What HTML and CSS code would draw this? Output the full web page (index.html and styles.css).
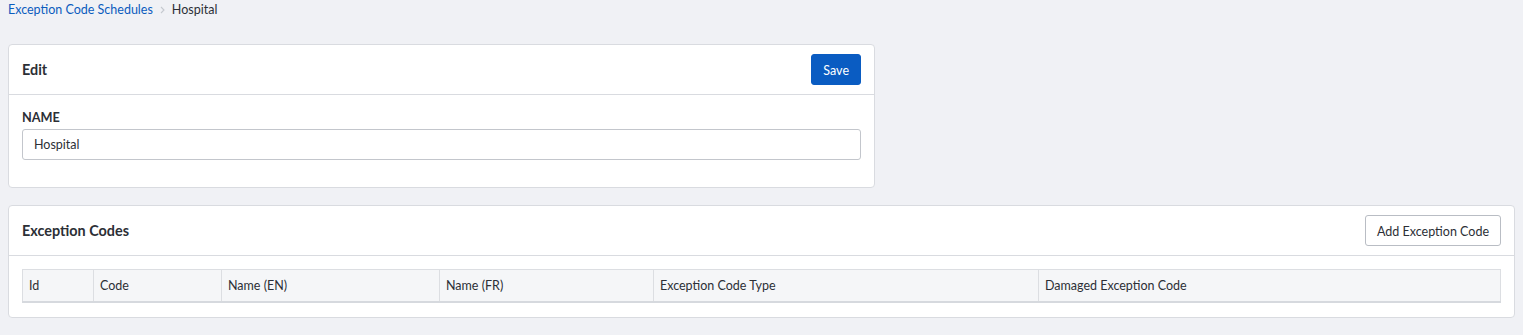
FILE: index.html
```html
<!DOCTYPE html>
<html lang="en">
<head>
  <meta charset="UTF-8" />
  <meta name="viewport" content="width=device-width, initial-scale=1.0" />
  <title>Hospital - Exception Code Schedules</title>
  <link rel="stylesheet" href="styles.css">
</head>
<body>
  <nav class="breadcrumb">
    <a href="#">Exception Code Schedules</a>
    <svg class="sep" width="5" height="8" viewBox="0 0 5 8"><path d="M1 1l3 3-3 3" fill="none" stroke="#c5c9cf" stroke-width="1.1"/></svg>
    <span class="current">Hospital</span>
  </nav>

  <div class="card edit-card">
    <div class="card-header">
      <h3>Edit</h3>
      <button class="btn btn-primary">Save</button>
    </div>
    <div class="card-body">
      <label for="name">NAME</label>
      <input type="text" id="name" value="Hospital" />
    </div>
  </div>

  <div class="card">
    <div class="card-header">
      <h3>Exception Codes</h3>
      <button class="btn btn-default">Add Exception Code</button>
    </div>
    <div class="card-body table-body">
      <table>
        <thead>
          <tr>
            <th class="col-id">Id</th>
            <th class="col-code">Code</th>
            <th class="col-en">Name (EN)</th>
            <th class="col-fr">Name (FR)</th>
            <th class="col-type">Exception Code Type</th>
            <th>Damaged Exception Code</th>
          </tr>
        </thead>
      </table>
    </div>
  </div>
</body>
</html>
```

FILE: styles.css
```css
body {
  font-family: Lato, 'Liberation Sans', sans-serif;
  margin: 0;
  padding: 0 8px;
  background: #f0f1f5;
  color: #2c2f36;
  font-size: 12.5px;
}
.breadcrumb {
  display: flex;
  align-items: center;
  height: 19px;
  font-size: 12.5px;
}
.breadcrumb a {
  color: #0b5cbe;
  text-decoration: none;
}
.breadcrumb .sep {
  margin: 1px 7px 0 7px;
}
.breadcrumb .current {
  color: #2c2f36;
}
.card {
  background: #ffffff;
  border: 1px solid #d9dbe0;
  border-radius: 4px;
  margin-top: 17px;
}
.edit-card {
  width: 865px;
  margin-top: 25px;
}
.card-header {
  display: flex;
  align-items: center;
  justify-content: space-between;
  height: 49px;
  padding: 0 13px;
  border-bottom: 1px solid #d9dbe0;
}
.card-header h3 {
  margin: 0;
  font-size: 14.4px;
  font-weight: 700;
  color: #2c2f36;
}
.btn {
  font-family: inherit;
  font-size: 12.5px;
  height: 31px;
  padding: 1px 11px 0;
  border-radius: 3px;
  cursor: pointer;
}
.btn-primary {
  background: #0a5cc2;
  color: #ffffff;
  border: 1px solid #0a5cc2;
}
.btn-default {
  background: #ffffff;
  color: #2c2f36;
  border: 1px solid #b9bdc4;
}
.card-body {
  padding: 14px 13px 27px;
}
label {
  display: block;
  font-size: 12.7px;
  font-weight: 700;
  color: #2c2f36;
  margin-bottom: 4px;
}
input {
  display: block;
  box-sizing: border-box;
  width: 100%;
  height: 31px;
  padding: 0 11px;
  border: 1px solid #c3c6cc;
  border-radius: 3px;
  font-family: inherit;
  font-size: 12.5px;
  color: #2c2f36;
}
.table-body {
  padding: 13px 13px 14px;
}
table {
  width: 100%;
  border-collapse: collapse;
  background: #f5f6f8;
  border: 1px solid #dcdee2;
  border-bottom: 2px solid #d6d9de;
}
th {
  text-align: left;
  font-weight: 400;
  font-size: 12.5px;
  color: #2c2f36;
  height: 31px;
  padding: 0 6px;
  border-right: 1px solid #dcdee2;
}
th:last-child {
  border-right: none;
}
.col-id { width: 58px; }
.col-code { width: 115px; }
.col-en { width: 205px; }
.col-fr { width: 201px; }
.col-type { width: 372px; }
```
